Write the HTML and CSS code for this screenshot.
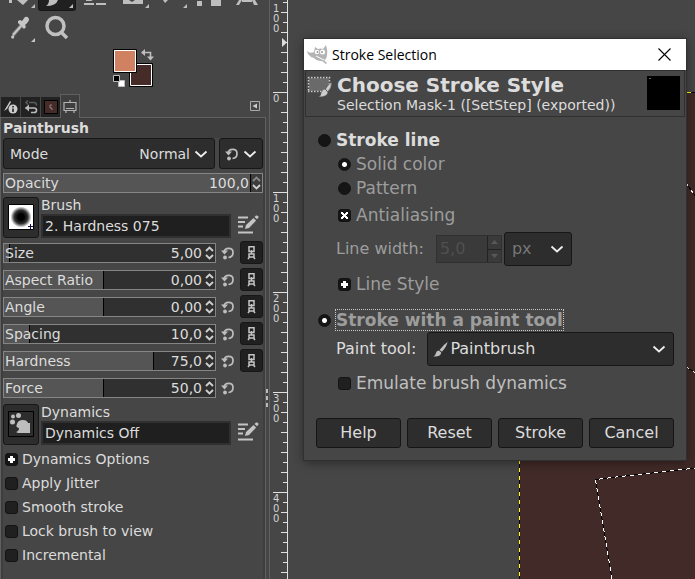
FILE: index.html
```
<!DOCTYPE html>
<html lang="en">
<head>
<meta charset="utf-8">
<title>Stroke Selection</title>
<link rel="stylesheet" href="styles.css">
</head>
<body>
<svg class="defs" aria-hidden="true">
  <symbol id="chevron" viewBox="0 0 14 8"><path d="M1.5 1.5 7 6.5 12.5 1.5" fill="none" stroke="#eee" stroke-width="1.8"/></symbol>
  <symbol id="reset" viewBox="0 0 14 14"><path d="M3 6.500C3.500 1 12 1 12 6.500 12 9.500 10 11.300 7.500 11.500" fill="none" stroke="#bebebe" stroke-width="1.700"/><path d="M0 4.500 3.500 8.500 7 4.500z" fill="#bebebe"/><circle cx="4" cy="11.500" r="1.900" fill="#bebebe"/></symbol>
  <symbol id="link" viewBox="0 0 9 15"><path d="M2 1.800H7V6.500H2zM4.500 5V9M2 12V9H7V12H2M2.500 12 1 14M6.500 12 8 14" fill="none" stroke="#c4c4c4" stroke-width="1.500"/></symbol>
  <symbol id="edit" viewBox="0 0 21 19"><path d="M0 2.500H10M0 7H7M0 11.500H5M0 17.500H15" stroke="#c4c4c4" stroke-width="2" fill="none"/><path d="m7 14 1-4 7.500-7 2.600 2.600L11 13ZM16.500 2 18 .6q1.200-.6 2 .4 1 1 .3 1.800L19 4.300Z" fill="#c4c4c4"/></symbol>
  <symbol id="up" viewBox="0 0 9 6"><path d="M1 5 4.500 1.500 8 5" fill="none" stroke="currentColor" stroke-width="1.900"/></symbol>
  <symbol id="down" viewBox="0 0 9 6"><path d="M1 1 4.500 4.500 8 1" fill="none" stroke="currentColor" stroke-width="1.900"/></symbol>
  <symbol id="brush" viewBox="0 0 16 17"><path d="M15.500.5Q14.800 5 9.500 11L7 9Q11 3.500 15.500.500ZM6.200 9.600 8.800 11.800Q8.500 16.500.500 16Q3 14.600 3 12.500 3.600 9.800 6.200 9.600Z" fill="#bebebe"/></symbol>
</svg>

<div class="app">
  <aside class="dock">
    <div class="tools tools-cut">
      <button class="tool" aria-label="Bucket fill"><svg viewBox="0 0 38 11"><path d="M9 0h3v3H9zM17 0h11l-5 5ZM35 4v4h-4z" fill="#bebebe"/></svg></button>
      <button class="tool active" aria-label="Paintbrush"><svg viewBox="0 0 36 10"><path d="M10 0h9q-2 6-12 6 3-2 3-6ZM34 4v4h-4z" fill="#bebebe"/></svg></button>
      <button class="tool" aria-label="Eraser"><svg viewBox="0 0 38 11"><path d="M10 0h7l-2 1h-5zM8 3h10v2H8zM20 3h10v2H20z" fill="#bebebe"/></svg></button>
      <button class="tool" aria-label="Clone"><svg viewBox="0 0 38 11"><path d="M9 0h6l3 2 3-2h8v4H9zM35 4v4h-4z" fill="#bebebe"/></svg></button>
      <button class="tool" aria-label="Smudge"><svg viewBox="0 0 38 11"><path d="M11 0h5l-3 3ZM35 4v4h-4z" fill="#bebebe"/></svg></button>
      <button class="tool" aria-label="Paths"><svg viewBox="0 0 38 11"><path d="M7 1h5v5H7zM21 0h10v6H21z" fill="#bebebe"/></svg></button>
      <button class="tool" aria-label="Text"><svg viewBox="0 0 38 11"><path d="M8 5 11 0h3l-3 5zM14 0h10v2H14zM24 0h3l3 5h-4z" fill="#bebebe"/></svg></button>
    </div>
    <div class="tools">
      <button class="tool" aria-label="Color picker"><svg viewBox="0 0 38 35"><path d="m13 24 8-9" stroke="#777" stroke-width="4"/><path d="m13 24 8-9" stroke="#c6c6c6" stroke-width="2"/><path d="m18 10 2-1 2 1 3-4q3-1 4 2 .500 2-4 6l1 2-2 2-6-6ZM13 24q2 1 1 3-2 2-3-1 0-1 2-2ZM35 27v4h-4z" fill="#c6c6c6"/></svg></button>
      <button class="tool" aria-label="Zoom"><svg viewBox="0 0 38 35"><circle cx="17.500" cy="15" r="8.500" fill="none" stroke="#c0c0c0" stroke-width="3.500"/><path d="m23 21 6 6" stroke="#c0c0c0" stroke-width="3.500"/></svg></button>
    </div>
    <svg class="colors" viewBox="0 0 42 40" role="img" aria-label="Foreground and background colors">
      <path d="M16.500 14.500h23v23h-23z" fill="#452c29" stroke="#000"/><path d="M17.500 15.500h21v21h-21z" fill="none" stroke="#fff"/>
      <path d="M.5.500h23v23H.5z" fill="#cf8162" stroke="#000"/><path d="M1.500 1.500h21v21h-21z" fill="none" stroke="#fff"/>
      <path d="M5.500 31.500h6v6h-6z" fill="#fff" stroke="#bbb"/><path d="M.5 26.500h6v6h-6z" fill="#000" stroke="#bbb"/>
      <path d="M30 3.500h7.500V9" fill="none" stroke="#bebebe" stroke-width="1.600"/><path d="M28 3.500 32 0v7zM34 7.500h7L37.500 11.500z" fill="#bebebe"/>
    </svg>

    <div class="tabs">
      <button class="tab" aria-label="Device status"><svg viewBox="0 0 14 14"><path d="m0 11 6-10 1 1-4 7Z" fill="#ccc"/><circle cx="9" cy="9" r="4.500" fill="#ccc"/><path d="M9 6v1.500M9 8.500v3.500" stroke="#222" stroke-width="1.600"/></svg></button>
      <button class="tab" aria-label="Undo history"><svg viewBox="0 0 14 14"><path d="M5 2.500h5q2.500 0 2.500 3M4 .5 2 2.500l2 2" fill="none" stroke="#5c5c5c" stroke-width="1.500"/><path d="M1.500 8H10q2.500 0 2.500 2.300T10 12.500H7" fill="none" stroke="#bbb" stroke-width="1.700"/><path d="M5 4.500v7L1 8z" fill="#bbb"/></svg></button>
      <button class="tab" aria-label="Image"><svg viewBox="0 0 14 14"><path d="M.5.500h13v13H.5z" fill="#452c29" stroke="#000"/><path d="M6 5v3h2v2M7 4v2" stroke="#aaa" stroke-width=".7" fill="none"/></svg></button>
      <button class="tab current" aria-label="Tool options"><svg viewBox="0 0 14 14"><path d="M1 2.500h12v8H1zM7 0v2M3 11v2M11 11v2M3 8.500h8" fill="none" stroke="#b4b4b4" stroke-width="1.200"/></svg></button>
      <button class="tab-menu" aria-label="Configure this tab"><svg viewBox="0 0 10 10"><path d="M.5.500h9v9h-9z" fill="none" stroke="#aaa"/><path d="M7 2.500v5L2.500 5z" fill="#ccc"/></svg></button>
    </div>

    <section class="options">
      <h2>Paintbrush</h2>
      <div class="mode-row">
        <div class="combo"><label for="mode">Mode</label><select id="mode"><option>Normal</option></select><svg class="chev"><use href="#chevron"/></svg></div>
        <button class="combo mode-reset" aria-label="Switch mode group"><svg class="ic-reset"><use href="#reset"/></svg><svg class="chev"><use href="#chevron"/></svg></button>
      </div>
      <div class="scale opacity" style="--fill:100%"><label for="opacity">Opacity</label><input id="opacity" value="100,0"><span class="steps"><button class="dim" aria-label="Increase"><svg><use href="#up"/></svg></button><button aria-label="Decrease"><svg><use href="#down"/></svg></button></span></div>

      <div class="resource">
        <button class="thumb" aria-label="Choose brush"><svg viewBox="0 0 26 26"><defs><radialGradient id="soft"><stop offset=".3" stop-color="#000"/><stop offset=".65" stop-color="#333"/><stop offset="1" stop-color="#fff"/></radialGradient></defs><path d="M.5.500h25v25H.5z" fill="#fff" stroke="#000"/><circle cx="13" cy="13" r="10.500" fill="url(#soft)"/><path d="M20 22.500h5M22.500 20v5" stroke="#114"/></svg></button>
        <div class="res-name"><label for="brush-name">Brush</label><input id="brush-name" value="2. Hardness 075"></div>
        <button class="icon-btn" aria-label="Edit brush"><svg class="ic-edit"><use href="#edit"/></svg></button>
      </div>

      <div class="scale-list">
        <div class="scale-row"><div class="scale" style="--fill:3%"><label for="s1">Size</label><input id="s1" value="5,00"><span class="steps"><button aria-label="Increase"><svg><use href="#up"/></svg></button><button aria-label="Decrease"><svg><use href="#down"/></svg></button></span></div><button class="icon-btn" aria-label="Reset size"><svg class="ic-reset"><use href="#reset"/></svg></button><button class="link-btn" aria-label="Link size"><svg><use href="#link"/></svg></button></div>
        <div class="scale-row"><div class="scale" style="--fill:50%"><label for="s2">Aspect Ratio</label><input id="s2" value="0,00"><span class="steps"><button aria-label="Increase"><svg><use href="#up"/></svg></button><button aria-label="Decrease"><svg><use href="#down"/></svg></button></span></div><button class="icon-btn" aria-label="Reset aspect ratio"><svg class="ic-reset"><use href="#reset"/></svg></button><button class="link-btn" aria-label="Link aspect ratio"><svg><use href="#link"/></svg></button></div>
        <div class="scale-row"><div class="scale" style="--fill:50%"><label for="s3">Angle</label><input id="s3" value="0,00"><span class="steps"><button aria-label="Increase"><svg><use href="#up"/></svg></button><button aria-label="Decrease"><svg><use href="#down"/></svg></button></span></div><button class="icon-btn" aria-label="Reset angle"><svg class="ic-reset"><use href="#reset"/></svg></button><button class="link-btn" aria-label="Link angle"><svg><use href="#link"/></svg></button></div>
        <div class="scale-row"><div class="scale" style="--fill:13%"><label for="s4">Spacing</label><input id="s4" value="10,0"><span class="steps"><button aria-label="Increase"><svg><use href="#up"/></svg></button><button aria-label="Decrease"><svg><use href="#down"/></svg></button></span></div><button class="icon-btn" aria-label="Reset spacing"><svg class="ic-reset"><use href="#reset"/></svg></button><button class="link-btn" aria-label="Link spacing"><svg><use href="#link"/></svg></button></div>
        <div class="scale-row"><div class="scale" style="--fill:75%"><label for="s5">Hardness</label><input id="s5" value="75,0"><span class="steps"><button aria-label="Increase"><svg><use href="#up"/></svg></button><button aria-label="Decrease"><svg><use href="#down"/></svg></button></span></div><button class="icon-btn" aria-label="Reset hardness"><svg class="ic-reset"><use href="#reset"/></svg></button><button class="link-btn" aria-label="Link hardness"><svg><use href="#link"/></svg></button></div>
        <div class="scale-row"><div class="scale" style="--fill:50%"><label for="s6">Force</label><input id="s6" value="50,0"><span class="steps"><button aria-label="Increase"><svg><use href="#up"/></svg></button><button aria-label="Decrease"><svg><use href="#down"/></svg></button></span></div><button class="icon-btn" aria-label="Reset force"><svg class="ic-reset"><use href="#reset"/></svg></button></div>
      </div>

      <div class="resource">
        <button class="thumb" aria-label="Choose dynamics"><svg viewBox="0 0 26 26"><path d="M.5.500h25v25H.5z" fill="#2d2d2d" stroke="#000"/><path d="M8 21q3-1 3-4-4-1-2-4 1-4 6-4 4 0 5 3h2v10H10Z" fill="#bebebe"/><circle cx="5" cy="5.500" r="2" fill="#bebebe"/><circle cx="10.500" cy="4.500" r="2.500" fill="#bebebe"/><circle cx="4.500" cy="11" r="2.500" fill="#bebebe"/></svg></button>
        <div class="res-name"><label for="dyn-name">Dynamics</label><input id="dyn-name" value="Dynamics Off"></div>
        <button class="icon-btn" aria-label="Edit dynamics"><svg class="ic-edit"><use href="#edit"/></svg></button>
      </div>

      <div class="checks">
        <button class="check expander"><span class="mark plus"></span>Dynamics Options</button>
        <label class="check"><input type="checkbox">Apply Jitter</label>
        <label class="check"><input type="checkbox">Smooth stroke</label>
        <label class="check"><input type="checkbox">Lock brush to view</label>
        <label class="check"><input type="checkbox">Incremental</label>
      </div>
    </section>
  </aside>

  <svg class="ruler" aria-label="Vertical ruler">
    <defs>
      <pattern id="ticks" y="12" width="23" height="20" patternUnits="userSpaceOnUse"><path d="M15 .5h7M17 10.500h5" stroke="#e0e0e0"/></pattern>
      <pattern id="majors" y="92" width="23" height="100" patternUnits="userSpaceOnUse"><path d="M7 .5h15" stroke="#e0e0e0"/></pattern>
    </defs>
    <rect width="23" height="100%" fill="url(#ticks)"/><rect width="23" height="100%" fill="url(#majors)"/>
    <rect x="21" width="1" height="100%" fill="#e0e0e0"/><rect x="3" width="1" height="100%" fill="#606060"/>
    <path d="M16 38v9l5-4.500z" fill="#ddd"/>
    <path d="M0 389h2v4H0zM0 396h2v4H0zM0 403h2v4H0z" fill="#bbb"/>
    <g class="digits">
      <text x="7" y="12">1</text><text x="7" y="22">0</text><text x="7" y="32">0</text>
      <text x="7" y="102">0</text>
      <text x="7" y="202">1</text><text x="7" y="212">0</text><text x="7" y="222">0</text>
      <text x="7" y="302">2</text><text x="7" y="312">0</text><text x="7" y="322">0</text>
      <text x="7" y="402">3</text><text x="7" y="412">0</text><text x="7" y="422">0</text>
      <text x="7" y="502">4</text><text x="7" y="512">0</text><text x="7" y="522">0</text>
    </g>
  </svg>

  <main class="canvas">
    <svg class="image" role="img" aria-label="Image canvas">
      <rect x="230" y="92" width="100%" height="100%" fill="#412a27"/>
      <path d="M230 92.500H2000M230.500 92V2000" class="ant black"/><path d="M230 92.500H2000M230.500 92V2000" class="ant yellow"/>
      <path d="M323 579 306.500 479.500 323 477.500 407 468M397 183l10 14M397 367l10 6" class="ant black"/>
      <path d="M323 579 306.500 479.500 323 477.500 407 468M397 183l10 14M397 367l10 6" class="ant white"/>
    </svg>

    <form class="dialog" role="dialog" aria-label="Stroke Selection" onsubmit="return false">
      <header class="titlebar">
        <svg class="wilber" viewBox="0 0 21 19"><path d="M0 6q3 3 7 1L8 2l3 2q3-1 5 0l3-4q2 6 1 11-1 4-3 4l3 3-1 1-4-3q-6 0-8-3-4-1-6-4Z" fill="#b4b4b4"/><circle cx="10" cy="7" r="2.300" fill="#fff"/><circle cx="15.500" cy="7" r="2.500" fill="#fff"/><circle cx="10.500" cy="7" r="1" fill="#999"/><circle cx="15" cy="7" r="1" fill="#999"/><path d="m9 11 8 4" stroke="#fff"/></svg>
        <span class="caption">Stroke Selection</span>
        <button class="close" aria-label="Close"><svg viewBox="0 0 13 13"><path d="m.5.500 12 12M12.500.500l-12 12" stroke="#000" stroke-width="1.100"/></svg></button>
      </header>
      <div class="head">
        <svg class="head-icon" viewBox="0 0 25 22"><path d="M2 2h20v13H2z" fill="#6a6a6a"/><path d="M1 1.500h22M1 15.500h14M1.500 1v15M22.500 1v7" stroke="#c8c8c8" stroke-width="1.500" stroke-dasharray="1.500 1.500" fill="none"/><path d="M24.500 6q.5 6-4 10l-2-3q3-5 6-7ZM18 13l3 3q0 5-10 5 3-1 3-4 1-4 4-4Z" fill="#ccc" stroke="#444" stroke-width=".5"/></svg>
        <div class="head-text"><h1>Choose Stroke Style</h1><p>Selection Mask-1 ([SetStep] (exported))</p></div>
        <svg class="preview" viewBox="0 0 33 34"><path d="M0 0h33v34H0z"/><path d="M2 2h2v1H2z" fill="#666"/></svg>
      </div>
      <div class="body">
        <label class="opt main"><input type="radio" name="kind">Stroke line</label>
        <div class="group muted">
          <label class="opt"><input type="radio" name="fill" checked>Solid color</label>
          <label class="opt"><input type="radio" name="fill">Pattern</label>
          <label class="opt spaced"><input type="checkbox" checked>Antialiasing</label>
        </div>
        <div class="field muted">
          <label for="lw">Line width:</label>
          <span class="spin"><input id="lw" value="5,0" disabled><span class="spin-btns"><button type="button" disabled aria-label="Increase"><svg viewBox="0 0 7 4"><path d="M0 4 3.500 0 7 4z"/></svg></button><button type="button" disabled aria-label="Decrease"><svg viewBox="0 0 7 4"><path d="M0 0 3.500 4 7 0z"/></svg></button></span></span>
          <div class="combo unit"><select aria-label="Unit" disabled><option>px</option></select><svg class="chev"><use href="#chevron"/></svg></div>
        </div>
        <div class="group muted style-group"><button type="button" class="opt expander"><span class="mark plus"></span>Line Style</button></div>

        <label class="opt main focused"><input type="radio" name="kind" checked><span>Stroke with a paint tool</span></label>
        <div class="field tool-field">
          <label for="pt">Paint tool:</label>
          <div class="combo grow"><svg class="ic-brush"><use href="#brush"/></svg><select id="pt"><option>Paintbrush</option></select><svg class="chev"><use href="#chevron"/></svg></div>
        </div>
        <div class="group emulate"><label class="opt"><input type="checkbox">Emulate brush dynamics</label></div>
        <footer class="actions"><button>Help</button><button>Reset</button><button>Stroke</button><button>Cancel</button></footer>
      </div>
    </form>
  </main>
</div>
</body>
</html>
```

FILE: styles.css
```
* { box-sizing: border-box; }
body { margin: 0; background: #464646; color: #dcdcdc; font: 14px/18px "DejaVu Sans", sans-serif; overflow: hidden; }
button, input, select { font: inherit; color: inherit; margin: 0; padding: 0; border: 0; background: none; border-radius: 0; outline: 0; }
h1, h2, p { margin: 0; }
svg { display: block; flex: none; }
.defs { position: absolute; width: 0; height: 0; }
.app { display: flex; height: 100vh; }

/* Left dock */
.dock { flex: 0 0 266px; min-width: 0; display: flex; flex-direction: column; }
.tools { display: flex; flex: none; height: 35px; overflow: hidden; }
.tools-cut { height: 11px; }
.tool { flex: none; width: 38px; height: 100%; }
.tool svg { width: 38px; height: 100%; }
.tool.active { background: #202020; border: solid #161616; border-width: 0 1px 1px; border-radius: 0 0 3px 3px; }
.tool.active svg { width: 36px; height: 10px; }
.colors { width: 42px; height: 40px; margin: 3px 0 5px 113px; }

.tabs { display: flex; align-items: flex-end; height: 24px; flex: none; padding-left: 1px; position: relative; z-index: 1; }
.tab { width: 19px; height: 20px; margin-right: 1px; margin-bottom: 1px; background: #222; display: grid; place-items: center; }
.tab svg { width: 14px; height: 14px; }
.tab.current { width: 20px; height: 24px; margin-bottom: 0; margin-left: -1px; background: #3e3e3e; border: 1px solid #606060; border-bottom: 0; }
.tab-menu { margin: 0 6px 7px auto; }
.tab-menu svg { width: 10px; height: 10px; }

.options { flex: 1; min-width: 0; border: 1px solid #606060; border-width: 1px 1px 0 1px; margin-top: -1px; padding: 0 2px; background: linear-gradient(#3e3e3e 0 20px, #464646 20px); box-shadow: inset 2px 0 #3e3e3e, inset -2px 0 #3e3e3e; }
h2 { font-size: 14px; line-height: 20px; font-weight: bold; }
.mode-row { display: flex; gap: 4px; }
.combo { display: flex; align-items: center; background: #2d2d2d; border: 1px solid #171717; border-radius: 3px; padding: 0 6px; }
.combo select { appearance: none; flex: 1; min-width: 0; }
.chev { width: 14px; height: 8px; }
.mode-row .combo { flex: 1; height: 31px; }
.mode-row select { text-align-last: right; padding-right: 4px; }
.mode-row .mode-reset { flex: 0 0 44px; padding: 0 5px; justify-content: space-between; }
.ic-reset { width: 14px; height: 14px; }

.scale { display: flex; align-items: center; min-width: 0; height: 20px; border: 1px solid #858585; padding-left: 1px; background: linear-gradient(to right, #555 calc(var(--fill) - 1px), #000 calc(var(--fill) - 1px) var(--fill), #303030 var(--fill)) 0 0 / calc(100% - 11px) 100% no-repeat #303030; }
.scale label { flex: none; }
.scale input { flex: 1; width: 0; min-width: 0; text-align: right; padding-right: 1px; }
.steps { width: 12px; height: 100%; display: flex; flex-direction: column; justify-content: space-between; align-items: center; padding: 2px 0; }
.steps button { height: 6px; color: #d0d0d0; }
.steps .dim { color: #888; }
.steps svg { width: 9px; height: 6px; }
.opacity { margin-top: 4px; background: #555; }
.opacity .steps { border-left: 1px solid #000; background: #3c3c3c; }

.resource { display: flex; align-items: center; gap: 2px; margin-top: 3px; }
.thumb { width: 36px; height: 41px; display: grid; place-items: center; background: #2d2d2d; border: 1px solid #171717; border-radius: 3px; flex: none; }
.thumb svg { width: 26px; height: 26px; }
.res-name { flex: 1; min-width: 0; margin-right: 5px; }
.res-name label { display: block; line-height: 18px; }
.res-name input { display: block; width: 100%; height: 24px; background: #1f1f1f; border: 2px solid #303030; padding-left: 2px; }
.resource .icon-btn { align-self: flex-end; padding: 0 4px 4px 0; }
.ic-edit { width: 21px; height: 19px; }
.scale-list { display: grid; gap: 4px; margin: 3px 0 4px; }
.scale-row { display: grid; grid-template-columns: minmax(0, 1fr) 14px 23px; gap: 5px; align-items: center; height: 23px; }
.link-btn { height: 23px; display: grid; place-items: center; background: #202020; border: 1px solid #171717; border-radius: 3px; }
.link-btn svg { width: 9px; height: 15px; }

.checks { margin-top: 2px; }
.check { display: flex; align-items: center; gap: 4px; height: 24px; padding-left: 2px; }
input[type="checkbox"], input[type="radio"], .mark { appearance: none; flex: none; width: 13px; height: 13px; background: #202020; border: 1px solid #131313; border-radius: 3px; }
input[type="radio"] { background: #151515; border-radius: 50%; }
input[type="radio"]:checked { background: radial-gradient(circle, #fff 0 2px, #151515 3px); }
.dialog input[type="checkbox"]:checked { background: linear-gradient(-45deg, transparent 42%, #fff 42% 58%, transparent 58%) center / 7px 7px no-repeat, linear-gradient(45deg, transparent 42%, #fff 42% 58%, transparent 58%) center / 7px 7px no-repeat #151515; }
.plus { background: linear-gradient(#fff, #fff) center / 7px 3px no-repeat, linear-gradient(#fff, #fff) center / 3px 7px no-repeat #151515; }

/* Ruler and canvas */
.ruler { width: 23px; height: 100%; }
.digits { font-size: 10px; fill: #d4d4d4; }
.canvas { flex: 1; position: relative; min-width: 0; }
.image { position: absolute; inset: 0; width: 100%; height: 100%; }
.ant { fill: none; stroke-width: 1; shape-rendering: crispEdges; }
.black { stroke: #000; }
.white { stroke: #fff; stroke-dasharray: 4 4; }
.yellow { stroke: #ff0; stroke-dasharray: 4 4; }

/* Dialog */
.dialog { position: absolute; left: 15px; right: 9px; top: 39px; background: #464646; outline: 1px solid #303030; box-shadow: 0 2px 10px rgba(0, 0, 0, .45); }
.titlebar { display: flex; align-items: center; height: 31px; background: #fff; color: #000; padding: 0 15px 0 3px; font: 14px/20px "Open Sans", sans-serif; }
.wilber { width: 21px; height: 19px; }
.caption { flex: 1; padding-left: 4px; }
.close svg { width: 13px; height: 13px; }
.head { display: flex; align-items: flex-start; margin: 0 1px 1px; height: 47px; border: 1px solid #303030; padding: 5px 4px 0 1px; }
.head-icon { width: 25px; height: 22px; }
.head-text { flex: 1; padding-left: 5px; min-width: 0; }
h1 { font-size: 20px; line-height: 19px; white-space: nowrap; }
.head-text p { line-height: 20px; white-space: nowrap; }
.preview { width: 33px; height: 34px; }
.body { padding: 10px 12px 12px; font-size: 16px; line-height: 20px; }
.opt { display: flex; align-items: center; gap: 5px; height: 24px; font-size: 17px; white-space: nowrap; }
.main { font-weight: bold; padding-left: 2px; }
.group { padding-left: 22px; }
.muted { color: #9d9d9d; }
.spaced { margin-top: 3px; }
.focused { color: #9d9d9d; margin-top: 12px; }
.focused span { outline: 1px dotted #c8c8c8; }
.field { display: flex; align-items: center; padding-left: 20px; height: 34px; }
.field > label { flex: none; }
.field.muted { margin-top: 5px; }
.spin { display: flex; height: 28px; width: 66px; margin: 0 2px 0 12px; background: #3a3a3a; border: 1px solid #303030; color: #505050; }
.spin input { flex: 1; min-width: 0; padding-left: 3px; }
.spin-btns { display: grid; width: 14px; border-left: 1px solid #222; }
.spin-btns button { display: grid; place-items: center; }
.spin-btns button + button { border-top: 1px solid #222; }
.spin-btns svg { width: 7px; height: 4px; fill: #585858; }
.body .combo { height: 34px; padding: 0 7px; }
.body .unit { width: 68px; color: #777; }
.unit select:disabled { opacity: 1; }
.style-group { margin-top: 6px; }
.body .grow { flex: 1; margin-left: 11px; gap: 2px; padding-left: 5px; }
.ic-brush { width: 15px; height: 17px; }
.emulate { margin-top: 5px; color: #bfbfbf; }
.actions { display: grid; grid-template-columns: repeat(4, 1fr); gap: 6px; margin-top: 23px; }
.actions button { height: 30px; background: #2d2d2d; border: 1px solid #151515; border-radius: 3px; }
```
